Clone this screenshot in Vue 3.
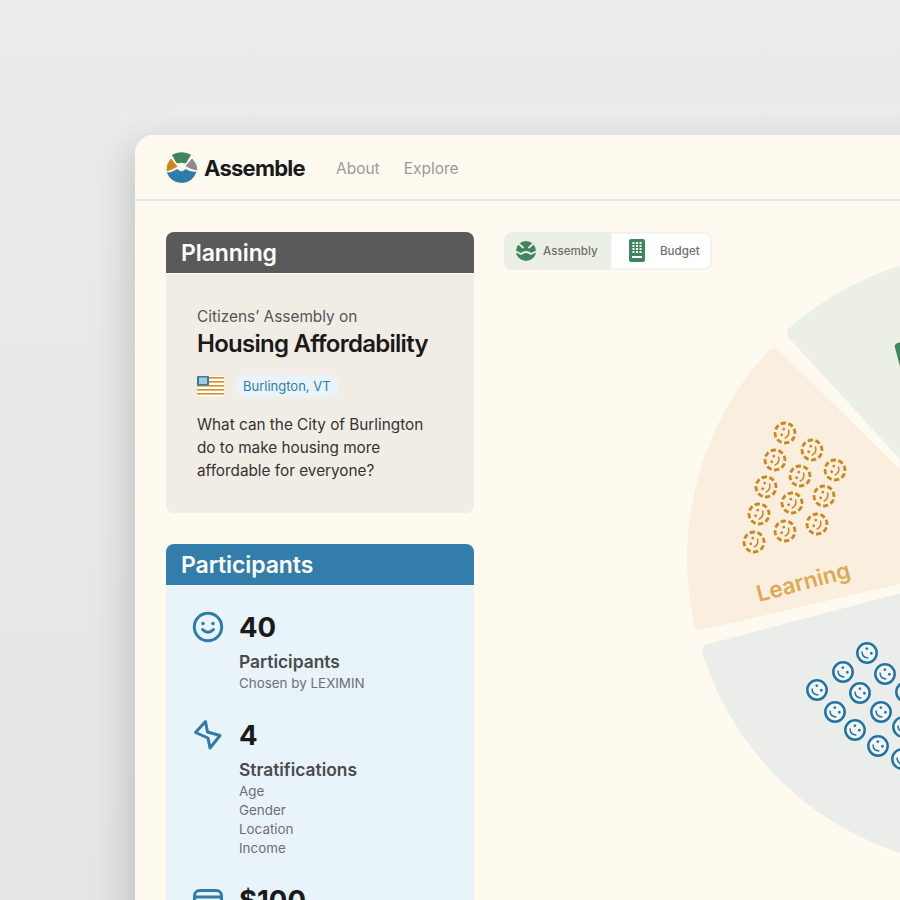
<template>
  <div class="page">
    <div class="window">
      <header class="topbar">
        <a class="brand" href="#">
          <svg class="brand-logo" viewBox="0 0 32 32" width="32" height="32">
            <path d="M6.5 3 Q15.5 -1.5 24.5 3 L19.5 11 Q15.5 9.5 11 11 Z" fill="#3f8560" stroke="#3f8560" stroke-linejoin="round" />
            <path d="M5 7 L11 14.5 Q6 17.5 1 19 Q0 13 5 7 Z" fill="#cc861c" stroke="#cc861c" stroke-width=".8" stroke-linejoin="round" />
            <path d="M26 7 Q31 12 31 18 Q25 17 20 14 Z" fill="#8c8c8c" stroke="#8c8c8c" stroke-width=".8" stroke-linejoin="round" />
            <path d="M.8 20.5 Q6 20.5 11.5 17 Q15.5 21.5 19.5 17 Q25 20.5 30.5 19.5 A15.5 15.5 0 0 1 .8 20.5 Z" fill="#2f7ca8" />
          </svg>
          <span>Assemble</span>
        </a>
        <nav class="nav">
          <a v-for="link in navLinks" :key="link" href="#">{{ link }}</a>
        </nav>
      </header>

      <div class="content">
        <aside class="sidebar">
          <section class="card card-planning">
            <h2 class="card-title">Planning</h2>
            <div class="card-body">
              <p class="eyebrow">Citizens’ Assembly on</p>
              <h1 class="headline">Housing Affordability</h1>
              <div class="place">
                <svg class="flag" viewBox="0 0 27 20" width="27" height="20">
                  <rect width="27" height="20" fill="#fff" />
                  <rect v-for="y in flagStripes" :key="y" x="0" :y="y" width="27" height="1.6" fill="#d68f22" />
                  <rect width="12" height="9.5" rx="1" fill="#2f7ca8" />
                  <rect x="2" y="1.5" width="8" height="6.5" fill="#a9c8dc" />
                </svg>
                <span class="place-tag">Burlington, VT</span>
              </div>
              <p class="question">What can the City of Burlington do to make housing more affordable for everyone?</p>
            </div>
          </section>

          <section class="card card-participants">
            <h2 class="card-title">Participants</h2>
            <div class="card-body stats">
              <div class="stat">
                <svg class="stat-icon" viewBox="0 0 32 32" width="32" height="32">
                  <circle cx="16" cy="16" r="13.7" class="icon-line" />
                  <path d="M10.5 18.5 Q16 24 21.5 18.5" class="icon-line" />
                  <circle cx="11" cy="12.5" r="1.7" fill="#2f7ca8" />
                  <circle cx="21" cy="12.5" r="1.7" fill="#2f7ca8" />
                </svg>
                <div>
                  <div class="stat-number">40</div>
                  <div class="stat-label">Participants</div>
                  <div class="stat-note">Chosen by LEXIMIN</div>
                </div>
              </div>
              <div class="stat">
                <svg class="stat-icon" viewBox="0 0 32 32" width="32" height="32">
                  <path d="M13.5 2.5 L15.5 13 L28 16.5 L18 29 L16 19 L3.5 13.5 Z" class="icon-line" stroke-linejoin="round" />
                </svg>
                <div>
                  <div class="stat-number">4</div>
                  <div class="stat-label">Stratifications</div>
                  <div v-for="s in strata" :key="s" class="stat-note">{{ s }}</div>
                </div>
              </div>
              <div class="stat">
                <svg class="stat-icon" viewBox="0 0 32 32" width="32" height="32">
                  <rect x="2.5" y="6.5" width="27" height="22" rx="5" class="icon-line" />
                  <path d="M2.5 13 H29.5" class="icon-line" />
                </svg>
                <div>
                  <div class="stat-number">$100</div>
                </div>
              </div>
            </div>
          </section>
        </aside>

        <main class="stage">
          <div class="toggle">
            <button class="toggle-item is-active">
              <svg viewBox="0 0 20 20" width="20" height="20">
                <circle cx="10" cy="10" r="10" fill="#3f8560" />
                <path d="M0 10.5 L5 13 Q10 9 15 13 L20 10.5 M2.5 2.5 L7.5 7 M17.5 2.5 L12.5 7" stroke="#ecefe4" stroke-width="1.8" fill="none" />
              </svg>
              <span>Assembly</span>
            </button>
            <button class="toggle-item">
              <svg viewBox="0 0 16 23" width="16" height="23">
                <rect width="16" height="23" rx="2" fill="#3f8560" />
                <rect v-for="key in budgetKeys" :key="key.id" :x="key.x" :y="key.y" width="2" height="2" fill="#fff" />
                <rect x="3" y="17" width="10" height="2" fill="#fff" />
              </svg>
              <span>Budget</span>
            </button>
          </div>

          <svg class="wheel" viewBox="504 232 396 668" width="396" height="668">
            <g stroke-width="14" stroke-linejoin="round">
              <path d="M794 333 A303 303 0 0 1 960 260 L998 556 Z" fill="#ecefe4" stroke="#ecefe4" />
              <path d="M774 355 A300 300 0 0 0 701 623 L980 558 Z" fill="#faefdf" stroke="#faefdf" />
              <path d="M709 651 A300 300 0 0 0 960 859 L985 578 Z" fill="#ebedeb" stroke="#ebedeb" />
            </g>
            <rect x="894" y="344" width="20" height="40" rx="4" transform="rotate(-15 894 344)" fill="#3f8560" />
            <g v-for="(p, i) in learners" :key="'l' + i" :transform="`translate(${p[0]} ${p[1]}) rotate(20)`">
              <circle r="10" class="dash-face" />
              <circle cx="-2.5" cy="-3.2" r="1.4" fill="#cc861c" />
              <circle cx="-2.5" cy="2.8" r="1.4" fill="#cc861c" />
              <path d="M2 -4.5 Q6 .5 1.5 5" class="smile-amber" />
            </g>
            <text class="wedge-label" transform="translate(759 602) rotate(-15)">Learning</text>
            <g v-for="(p, i) in citizens" :key="'c' + i" :transform="`translate(${p[0]} ${p[1]}) rotate(45)`">
              <circle r="11.2" class="blue-halo" />
              <circle r="9.7" class="blue-face" />
              <circle cx="-3.2" cy="-3" r="1.4" fill="#1f74a6" />
              <circle cx="3.2" cy="-3" r="1.4" fill="#1f74a6" />
              <path d="M-4.5 2.5 Q0 7 4.5 2.5" class="smile-blue" />
            </g>
          </svg>
        </main>
      </div>
    </div>
  </div>
</template>

<script setup>
const navLinks = ["About", "Explore"];
const strata = ["Age", "Gender", "Location", "Income"];
const flagStripes = [1, 5, 9, 13, 17];

const budgetKeys = [];
for (let row = 0; row < 4; row++) {
  for (let col = 0; col < 3; col++) {
    budgetKeys.push({ id: `${row}-${col}`, x: 3.5 + col * 3.5, y: 3 + row * 3 });
  }
}

const learners = [
  [785, 433], [812, 450], [835, 470], [775, 460], [800, 476], [824, 496],
  [766, 487], [792, 503], [817, 524], [759, 514], [785, 531], [754, 542],
];

const citizens = [
  [867, 653], [843, 672], [885, 674], [817, 690], [860, 693], [906, 692],
  [835, 712], [881, 712], [855, 730], [878, 746], [902, 759], [903, 727],
];
</script>

<style>
html,
body {
  margin: 0;
}
</style>

<style scoped>
.page {
  width: 900px;
  height: 900px;
  box-sizing: border-box;
  padding: 135px 0 0 135px;
  overflow: hidden;
  background: linear-gradient(180deg, #ececec, #e4e5e6);
  font-family: Inter, "Liberation Sans", sans-serif;
}

.window {
  width: 900px;
  height: 900px;
  background: #fffaf0;
  border-radius: 18px 0 0 0;
  box-shadow: -6px 12px 36px rgba(60, 60, 60, 0.22);
}

.topbar {
  display: flex;
  align-items: center;
  height: 63px;
  padding: 1px 0 0 31px;
  border-bottom: 2px solid #e7e7e5;
}

.brand {
  display: flex;
  align-items: center;
  gap: 6px;
  color: #1a1a1a;
  font-size: 22px;
  font-weight: 700;
  letter-spacing: -0.75px;
  text-decoration: none;
}

.nav {
  display: flex;
  gap: 24px;
  margin-left: 31px;
  padding-top: 1px;
}

.nav a {
  color: #9b9b98;
  font-size: 15.5px;
  text-decoration: none;
}

.content {
  display: flex;
  gap: 30px;
  padding: 31px 0 0 31px;
}

.sidebar {
  display: flex;
  flex-direction: column;
  gap: 31px;
  width: 308px;
  flex: none;
}

.card {
  border-radius: 8px;
  overflow: hidden;
}

.card-title {
  margin: 0;
  padding: 0 15px;
  height: 41px;
  line-height: 43px;
  border-bottom: 1px solid #fffaf0;
  color: #fff;
  font-size: 23px;
  font-weight: 600;
  letter-spacing: -0.1px;
}

.card-body {
  padding: 31px 31px 29px;
}

.card-planning .card-title {
  background: #5a5a5a;
}

.card-planning .card-body {
  background: #f1ede5;
  height: 179px;
}

.card-participants .card-title {
  background: #337dab;
}

.card-participants .card-body {
  background: #e8f4fa;
}

.eyebrow {
  margin: 0;
  color: #555;
  font-size: 15.4px;
  line-height: 24px;
}

.headline {
  margin: 0;
  color: #1a1a1a;
  font-size: 24px;
  font-weight: 600;
  letter-spacing: -0.73px;
  line-height: 30px;
}

.place {
  display: flex;
  align-items: center;
  gap: 11px;
  margin-top: 16px;
}

.place-tag {
  padding: 0 8px;
  height: 22px;
  line-height: 22px;
  border-radius: 10px;
  background: #e8f4fa;
  color: #337dab;
  font-size: 13px;
  font-weight: 400;
}

.question {
  margin: 16px 0 0;
  color: #333;
  font-size: 15.3px;
  line-height: 23px;
}

.stats {
  padding: 24px 26px;
}

.stat {
  display: flex;
  gap: 15px;
  margin-bottom: 25px;
}

.stat-icon {
  flex: none;
  margin-top: 1px;
}

.stat-number {
  color: #1a1a1a;
  font-size: 27.5px;
  font-weight: 700;
  line-height: 34px;
}

.stat-label {
  margin-top: 6px;
  color: #4a4a4a;
  font-size: 17.4px;
  font-weight: 600;
  line-height: 24px;
}

.stat-note {
  color: #6f6f6f;
  font-size: 13.4px;
  line-height: 19px;
}

.icon-line {
  fill: none;
  stroke: #2f7ca8;
  stroke-width: 3;
  stroke-linecap: round;
}

.stage {
  flex: none;
  width: 396px;
  position: relative;
}

.toggle {
  display: inline-flex;
  height: 38px;
  border-radius: 8px;
  overflow: hidden;
  position: relative;
  z-index: 1;
  vertical-align: top;
}

.toggle-item {
  display: flex;
  align-items: center;
  border: none;
  padding: 0 0 1px;
  background: #fff;
  color: #6f6f6f;
  font-family: inherit;
  font-size: 11.6px;
  font-weight: 500;
}

.toggle-item:first-child {
  width: 106px;
  gap: 7px;
  padding-left: 12px;
}

.toggle-item:last-child {
  width: 102px;
  gap: 15px;
  padding-left: 19px;
  border-radius: 0 8px 8px 0;
  box-shadow: inset 0 0 0 1.5px #efefeb;
}

.toggle-item.is-active {
  background: #ecefe4;
}

/* the wheel runs up behind the toggle */
.wheel {
  position: absolute;
  top: 0;
  left: 0;
  display: block;
  overflow: hidden;
}

.wedge-label {
  fill: #dcaa55;
  font-size: 22.5px;
  font-weight: 600;
}

.dash-face {
  fill: none;
  stroke: #cc861c;
  stroke-width: 2.8;
  stroke-dasharray: 5.2 2.6;
}

.blue-halo {
  fill: #f3f5f4;
}

.blue-face {
  fill: none;
  stroke: #1f74a6;
  stroke-width: 2.5;
}

.smile-amber {
  fill: none;
  stroke: #cc861c;
  stroke-width: 1.5;
}

.smile-blue {
  fill: none;
  stroke: #1f74a6;
  stroke-width: 1.5;
}
</style>
